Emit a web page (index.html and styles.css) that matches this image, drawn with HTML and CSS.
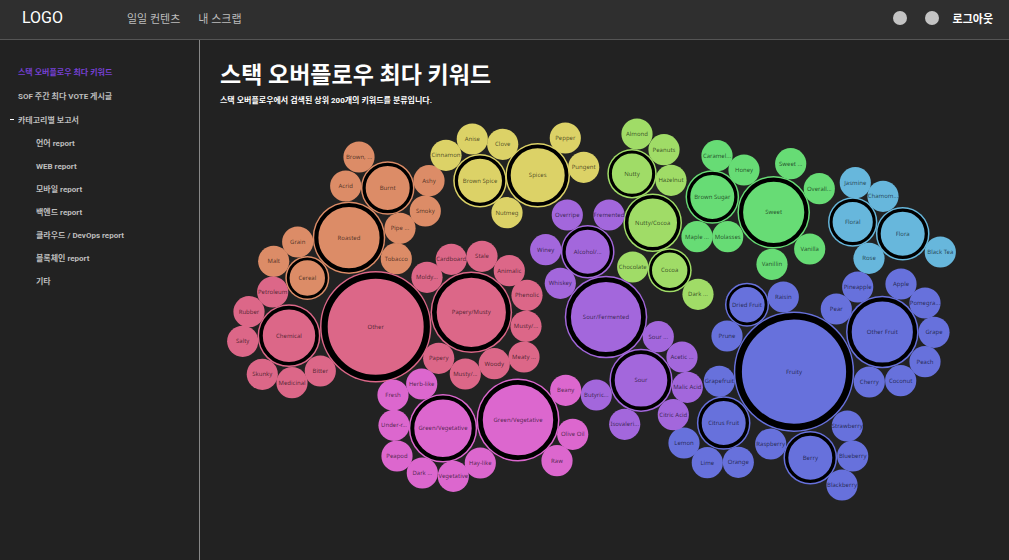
FILE: index.html
```html
<!DOCTYPE html>
<html lang="ko">
<head>
<meta charset="utf-8">
<meta name="viewport" content="width=device-width, initial-scale=1">
<title>스택 오버플로우 최다 키워드</title>
<link rel="stylesheet" href="styles.css">
</head>
<body>
<header class="topbar">
  <a class="logo" href="#">LOGO</a>
  <nav class="topnav">
    <a href="#">일일 컨텐츠</a>
    <a href="#">내 스크랩</a>
  </nav>
  <div class="account">
    <button class="dot" type="button" aria-label="알림"></button>
    <button class="dot" type="button" aria-label="프로필"></button>
    <button class="logout" type="button">로그아웃</button>
  </div>
</header>
<div class="layout">
  <nav class="sidebar">
    <ul class="menu">
      <li><a class="active" href="#">스택 오버플로우 최다 키워드</a></li>
      <li><a href="#">SOF 주간 최다 VOTE 게시글</a></li>
      <li>
        <button class="toggle" type="button" aria-expanded="true">카테고리별 보고서</button>
        <ul class="submenu">
          <li><a href="#">언어 report</a></li>
          <li><a href="#">WEB report</a></li>
          <li><a href="#">모바일 report</a></li>
          <li><a href="#">백엔드 report</a></li>
          <li><a href="#">클라우드 / DevOps report</a></li>
          <li><a href="#">블록체인 report</a></li>
          <li><a href="#">기타</a></li>
        </ul>
      </li>
    </ul>
  </nav>
  <main class="content">
    <h1 class="title">스택 오버플로우 최다 키워드</h1>
    <p class="subtitle">스택 오버플로우에서 검색된 상위 200개의 키워드를 분류입니다.</p>
    <svg class="chart" id="chart" viewBox="2200 1100 7690 4000" role="img" aria-label="키워드 분류"></svg>
  </main>
</div>
<script src="chart.js"></script>
</body>
</html>
```
FILE: styles.css
```css
* { box-sizing: border-box; }
body {
  margin: 0;
  min-height: 100vh;
  display: flex;
  flex-direction: column;
  background: #222;
  color: #fff;
  font-family: Roboto, "Noto Sans CJK KR", sans-serif;
}
a { color: inherit; text-decoration: none; }
button {
  padding: 0;
  border: 0;
  background: none;
  color: inherit;
  font: inherit;
  cursor: pointer;
}
ul { list-style: none; margin: 0; padding: 0; }

.topbar {
  display: flex;
  align-items: center;
  height: 40px;
  padding: 0 16px 4px 22px;
  background: #2f2f2f;
  border-bottom: 1px solid #555;
}
.logo { width: 105px; font-size: 16px; }
.topnav { display: flex; gap: 18px; font-size: 11px; color: #bdbdbd; }
.account { display: flex; align-items: center; gap: 18px; margin-left: auto; }
.dot { width: 14px; height: 14px; border-radius: 50%; background: #c4c4c4; }
.logout { margin-left: -4px; font-size: 11px; font-weight: 700; }

.layout { display: flex; flex: 1; }
.sidebar {
  flex: 0 0 200px;
  padding: 21px 0 0 18px;
  border-right: 1px solid #888;
  color: #bdbdbd;
  font-size: 8px;
  font-weight: 700;
  line-height: 23px;
}
.menu > li > a { display: block; line-height: 24px; }
.active { color: #7640d4; }
.toggle { display: block; position: relative; }
.toggle::before {
  content: "";
  position: absolute;
  left: -8px;
  top: 10px;
  width: 4px;
  height: 1px;
  background: #fff;
}
.submenu { padding-left: 18px; }
.submenu a { display: block; }

.content { flex: 1; min-width: 0; padding: 21px 20px 0; }
.title { margin: 0; font-size: 23px; line-height: 30px; font-weight: 700; }
.subtitle { margin: 4px 0 0; font-size: 8px; line-height: 12px; font-weight: 700; }
.chart { display: block; width: 100%; margin-top: 3px; }
.label {
  font-family: "Noto Sans", "Open Sans", sans-serif;
  font-size: 60px;
  text-rendering: geometricPrecision;
  fill: #000;
  fill-opacity: 0.65;
  text-anchor: middle;
}
.ring { fill: none; stroke: #000; }
```
FILE: chart.js
```js
// Node: [label, x, y, radius]; nodes with no radius are leaves.
const LEAF = 156;
const groups = [
  ["#dc8c67", [
    ["Brown, ...", 3590, 1570], ["Acrid", 3457, 1860], ["Ashy", 4290, 1807], ["Smoky", 4253, 2110],
    ["Pipe ...", 4000, 2283], ["Tobacco", 3963, 2587], ["Grain", 2977, 2420], ["Malt", 2737, 2613],
    ["Burnt", 3877, 1880, 268], ["Roasted", 3490, 2377, 363], ["Cereal", 3073, 2780, 220]]],
  ["#dc6788", [
    ["Petroleum", 2727, 2920], ["Rubber", 2490, 3117], ["Salty", 2427, 3413], ["Skunky", 2623, 3743],
    ["Medicinal", 2920, 3827], ["Bitter", 3203, 3710], ["Moldy...", 4270, 2773], ["Cardboard", 4513, 2593],
    ["Stale", 4820, 2563], ["Animalic", 5093, 2707], ["Phenolic", 5270, 2953], ["Musty/...", 5260, 3263],
    ["Meaty ...", 5240, 3570], ["Woody", 4943, 3637], ["Musty/...", 4653, 3740], ["Papery", 4387, 3583],
    ["Chemical", 2890, 3357, 314], ["Other", 3757, 3267, 557], ["Papery/Musty", 4713, 3123, 408]]],
  ["#dcd267", [
    ["Cinnamon", 4460, 1553], ["Anise", 4723, 1390], ["Clove", 5027, 1443], ["Pepper", 5653, 1380],
    ["Pungent", 5837, 1673], ["Nutmeg", 5070, 2127], ["Brown Spice", 4800, 1807, 268], ["Spices", 5377, 1753, 323]]],
  ["#a0dc67", [
    ["Almond", 6370, 1340], ["Peanuts", 6640, 1497], ["Hazelnut", 6710, 1803], ["Chocolate", 6327, 2670],
    ["Dark ...", 6980, 2943], ["Nutty", 6320, 1737, 247], ["Nutty/Cocoa", 6527, 2227, 293], ["Cocoa", 6697, 2703, 220]]],
  ["#67dc75", [
    ["Caramel...", 7170, 1557], ["Honey", 7440, 1700], ["Sweet ...", 7907, 1637], ["Overall...", 8193, 1887],
    ["Vanilla", 8097, 2490], ["Vanillin", 7720, 2643], ["Maple ...", 6970, 2367], ["Molasses", 7277, 2367],
    ["Brown Sugar", 7123, 1970, 268], ["Sweet", 7737, 2123, 363]]],
  ["#67b7dc", [
    ["Jasmine", 8553, 1827], ["Chamom...", 8830, 1963], ["Black Tea", 9403, 2520], ["Rose", 8690, 2583],
    ["Floral", 8527, 2220, 247], ["Flora", 9027, 2337, 268]]],
  ["#6771dc", [
    ["Pineapple", 8577, 2870], ["Apple", 9010, 2840], ["Pomegra...", 9250, 3030], ["Pear", 8363, 3090],
    ["Grape", 9340, 3323], ["Peach", 9250, 3617], ["Coconut", 9007, 3807], ["Cherry", 8693, 3820],
    ["Raisin", 7833, 2970], ["Prune", 7270, 3360], ["Grapefruit", 7193, 3813], ["Lemon", 6840, 4430],
    ["Lime", 7073, 4627], ["Orange", 7383, 4623], ["Raspberry", 7707, 4440], ["Strawberry", 8473, 4260],
    ["Blueberry", 8527, 4560], ["Blackberry", 8420, 4850],
    ["Other Fruit", 8823, 3320, 363], ["Dried Fruit", 7470, 3047, 220], ["Citrus Fruit", 7237, 4230, 268],
    ["Berry", 8103, 4577, 268], ["Fruity", 7940, 3717, 602]]],
  ["#a367dc", [
    ["Overripe", 5673, 2150], ["Fremented", 6090, 2150], ["Winey", 5457, 2497], ["Whiskey", 5603, 2833],
    ["Sour ...", 6583, 3367], ["Acetic ...", 6820, 3570], ["Malic Acid", 6873, 3873], ["Citric Acid", 6733, 4147],
    ["Butyric...", 5963, 3950], ["Isovaleri...", 6247, 4243],
    ["Alcohol/...", 5877, 2517, 268], ["Sour/Fermented", 6060, 3170, 413], ["Sour", 6410, 3803, 316]]],
  ["#dc67ce", [
    ["Fresh", 3930, 3950], ["Herb-like", 4217, 3840], ["Under-r...", 3940, 4253], ["Peapod", 3970, 4560],
    ["Dark ...", 4223, 4730], ["Vegetative", 4533, 4763], ["Hay-like", 4803, 4630], ["Beany", 5657, 3903],
    ["Olive Oil", 5727, 4343], ["Raw", 5570, 4607],
    ["Green/Vegetative", 4430, 4283, 342], ["Green/Vegetative", 5180, 4200, 415]]]
];

const chart = document.getElementById("chart");

function add(parent, name, attrs) {
  const el = document.createElementNS("http://www.w3.org/2000/svg", name);
  for (const key in attrs) el.setAttribute(key, attrs[key]);
  parent.appendChild(el);
  return el;
}

for (const [color, nodes] of groups) {
  const group = add(chart, "g", { fill: color });
  for (const [label, cx, cy, radius] of nodes) {
    add(group, "circle", { cx, cy, r: radius || LEAF });
    if (radius) {
      const width = Math.round(radius * 0.1 + 6);
      add(group, "circle", { class: "ring", cx, cy, r: radius - 15 - width / 2, "stroke-width": width });
    }
    add(group, "text", { class: "label", x: cx, y: cy + 20 }).textContent = label;
  }
}
```
